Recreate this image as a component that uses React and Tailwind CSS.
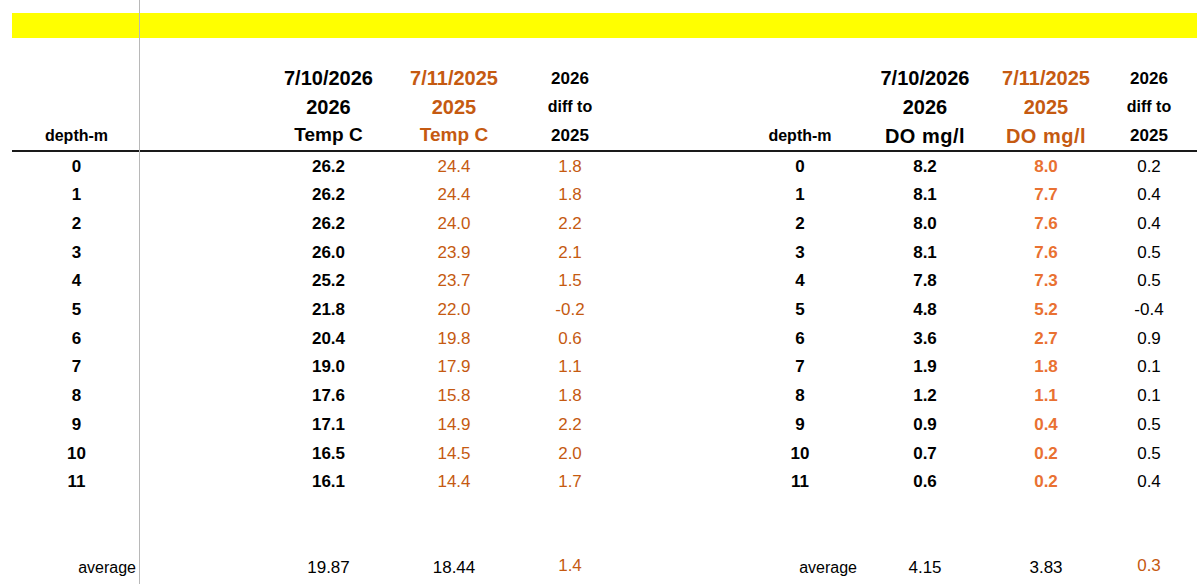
import React from 'react';

const depths = ['0', '1', '2', '3', '4', '5', '6', '7', '8', '9', '10', '11'];
const temp26 = ['26.2', '26.2', '26.2', '26.0', '25.2', '21.8', '20.4', '19.0', '17.6', '17.1', '16.5', '16.1'];
const temp25 = ['24.4', '24.4', '24.0', '23.9', '23.7', '22.0', '19.8', '17.9', '15.8', '14.9', '14.5', '14.4'];
const tempDiff = ['1.8', '1.8', '2.2', '2.1', '1.5', '-0.2', '0.6', '1.1', '1.8', '2.2', '2.0', '1.7'];
const do26 = ['8.2', '8.1', '8.0', '8.1', '7.8', '4.8', '3.6', '1.9', '1.2', '0.9', '0.7', '0.6'];
const do25 = ['8.0', '7.7', '7.6', '7.6', '7.3', '5.2', '2.7', '1.8', '1.1', '0.4', '0.2', '0.2'];
const doDiff = ['0.2', '0.4', '0.4', '0.5', '0.5', '-0.4', '0.9', '0.1', '0.1', '0.5', '0.5', '0.4'];

const ROW = 'h-[28.7px] flex items-center';
const COLS = 'grid grid-cols-[126px_125px_126px_106px_118px_118px_132px_110px_1fr]';

const Cell = ({ className = '', children }) => (
  <div className={`${ROW} justify-center ${className}`}>{children}</div>
);

const TopBand = () => (
  <>
    <div className="h-[13px]" />
    <div className="h-[25px] bg-[#ffff00]" />
    <div className="h-[26px]" />
  </>
);

export default function App() {
  return (
    <div className="flex h-[584px] w-[1197px] overflow-hidden bg-white text-black font-['Liberation_Sans',Arial,sans-serif]">
      {/* frozen left pane */}
      <div className="w-[140px] shrink-0 border-r border-[#b8b8b8] pl-[12px]">
        <TopBand />
        <div className="border-b-2 border-[#1a1a1a]">
          <div className={ROW} />
          <div className={ROW} />
          <Cell className="text-[16px] font-bold pl-[2px]">depth-m</Cell>
        </div>
        {depths.map((d) => (
          <Cell key={d} className="text-[17px] font-bold pl-[2px]">{d}</Cell>
        ))}
        <div className={ROW} />
        <div className={ROW} />
        <div className={`${ROW} justify-end pr-[3px] text-[16px]`}>average</div>
      </div>

      {/* main pane */}
      <div className="flex-1">
        <TopBand />
        <div className={`${COLS} border-b-2 border-[#1a1a1a]`}>
          <div />
          <Cell className="text-[20px] font-bold">7/10/2026</Cell>
          <Cell className="text-[20px] font-bold text-[#c55a11]">7/11/2025</Cell>
          <Cell className="text-[17px] font-bold">2026</Cell>
          <div />
          <div />
          <Cell className="text-[20px] font-bold">7/10/2026</Cell>
          <Cell className="text-[20px] font-bold text-[#c55a11]">7/11/2025</Cell>
          <Cell className="text-[17px] font-bold">2026</Cell>

          <div />
          <Cell className="text-[20px] font-bold">2026</Cell>
          <Cell className="text-[20px] font-bold text-[#c55a11]">2025</Cell>
          <Cell className="text-[16px] font-bold">diff to</Cell>
          <div />
          <div />
          <Cell className="text-[20px] font-bold">2026</Cell>
          <Cell className="text-[20px] font-bold text-[#c55a11]">2025</Cell>
          <Cell className="text-[16px] font-bold">diff to</Cell>

          <div />
          <Cell className="text-[19px] font-bold">Temp C</Cell>
          <Cell className="text-[19px] font-bold text-[#c55a11]">Temp C</Cell>
          <Cell className="text-[17px] font-bold">2025</Cell>
          <div />
          <Cell className="text-[16px] font-bold">depth-m</Cell>
          <Cell className="text-[20px] font-bold tracking-[0.5px]">DO mg/l</Cell>
          <Cell className="text-[20px] font-bold tracking-[0.5px] text-[#c55a11]">DO mg/l</Cell>
          <Cell className="text-[17px] font-bold">2025</Cell>
        </div>

        {depths.map((d, i) => (
          <div key={d} className={COLS}>
            <div />
            <Cell className="text-[17px] font-bold">{temp26[i]}</Cell>
            <Cell className="text-[17px] text-[#c55a11]">{temp25[i]}</Cell>
            <Cell className="text-[17px] text-[#c55a11]">{tempDiff[i]}</Cell>
            <div />
            <Cell className="text-[17px] font-bold">{d}</Cell>
            <Cell className="text-[17px] font-bold">{do26[i]}</Cell>
            <Cell className="text-[17px] font-bold text-[#e97132]">{do25[i]}</Cell>
            <Cell className="text-[17px]">{doDiff[i]}</Cell>
          </div>
        ))}

        <div className={ROW} />
        <div className={ROW} />
        <div className={COLS}>
          <div />
          <Cell className="text-[17px]">19.87</Cell>
          <Cell className="text-[17px]">18.44</Cell>
          <Cell className="text-[17px] text-[#c55a11] pb-[4px]">1.4</Cell>
          <div />
          <div className={`${ROW} justify-end pr-[2px] text-[16px]`}>average</div>
          <Cell className="text-[17px]">4.15</Cell>
          <Cell className="text-[17px]">3.83</Cell>
          <Cell className="text-[17px] text-[#c55a11] pb-[4px]">0.3</Cell>
        </div>
      </div>
    </div>
  );
}
